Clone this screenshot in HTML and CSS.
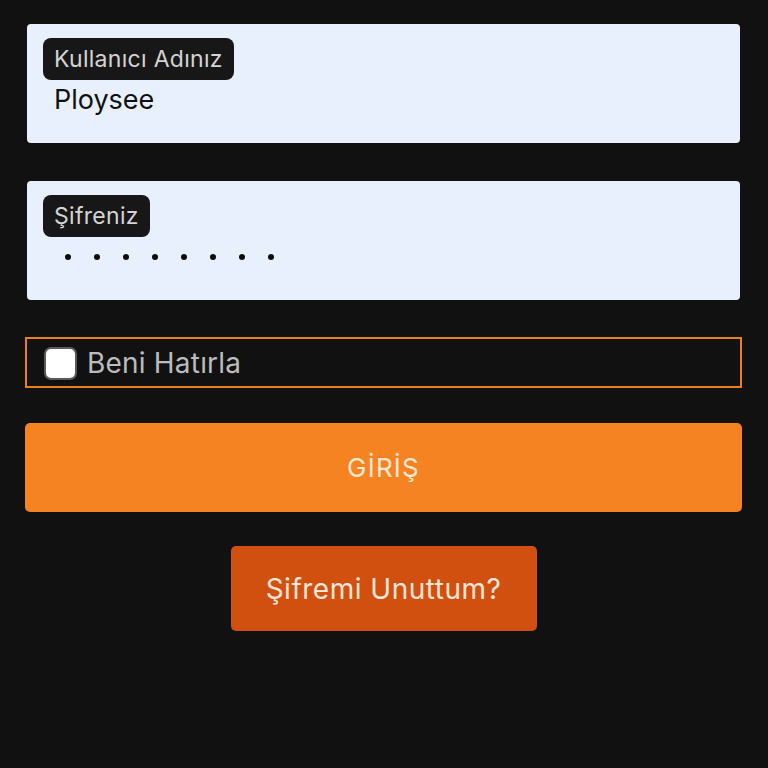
FILE: index.html
```html
<!DOCTYPE html>
<html lang="tr">
<head>
<meta charset="utf-8">
<title>Giriş</title>
<link rel="stylesheet" href="styles.css">
</head>
<body>
<form class="login">
  <div class="field">
    <span class="chip">Kullanıcı Adınız</span>
    <span class="value">Ploysee</span>
  </div>
  <div class="field field-pass">
    <span class="chip">Şifreniz</span>
    <span class="dots"><i></i><i></i><i></i><i></i><i></i><i></i><i></i><i></i></span>
  </div>
  <label class="remember">
    <span class="box"></span>
    <span class="remember-text">Beni Hatırla</span>
  </label>
  <div class="btn-login">GİRİŞ</div>
  <div class="btn-forgot">Şifremi Unuttum?</div>
</form>
</body>
</html>
```
FILE: styles.css
```css
html, body {
  margin: 0;
  padding: 0;
  background: #111111;
  height: 100%;
}
body {
  font-family: Inter, Roboto, sans-serif;
}
.login {
  display: flex;
  flex-direction: column;
  padding: 24px 26px 0 25px;
}
.field {
  margin: 0 2px;
  height: 119px;
  box-sizing: border-box;
  background: #e8f0fe;
  border-radius: 4px;
  padding: 14px 16px;
  display: flex;
  flex-direction: column;
  align-items: flex-start;
}
.field-pass {
  margin-top: 38px;
}
.chip {
  background: #171717;
  color: #d4d4d4;
  font-size: 23px;
  letter-spacing: 0.3px;
  height: 42px;
  line-height: 42px;
  padding: 0 11px;
  border-radius: 8px;
}
.value {
  margin: 4px 0 0 11px;
  font-size: 27px;
  line-height: 32px;
  color: #111111;
}
.dots {
  display: flex;
  gap: 23px;
  margin: 17px 0 0 22px;
}
.dots i {
  width: 6px;
  height: 6px;
  border-radius: 50%;
  background: #0c0c0c;
}
.remember {
  margin-top: 37px;
  height: 51px;
  box-sizing: border-box;
  border: 2px solid #ea7f1e;
  display: flex;
  align-items: center;
  padding: 0 0 0 17px;
}
.box {
  width: 29px;
  height: 29px;
  background: #ffffff;
  border: 2px solid #5a5a5a;
  border-radius: 7px;
  margin-top: 2px;
}
.remember-text {
  margin-left: 10px;
  font-size: 28px;
  letter-spacing: 0.2px;
  color: #bcbcbc;
}
.btn-login {
  margin-top: 35px;
  height: 89px;
  background: #f58321;
  border-radius: 5px;
  display: flex;
  align-items: center;
  justify-content: center;
  font-size: 26px;
  letter-spacing: 1.2px;
  color: #fde8d4;
}
.btn-forgot {
  margin: 34px auto 0;
  width: 306px;
  height: 85px;
  background: #d2500f;
  border-radius: 5px;
  display: flex;
  align-items: center;
  justify-content: center;
  font-size: 28px;
  letter-spacing: 0.5px;
  color: #fbe6da;
}
```
